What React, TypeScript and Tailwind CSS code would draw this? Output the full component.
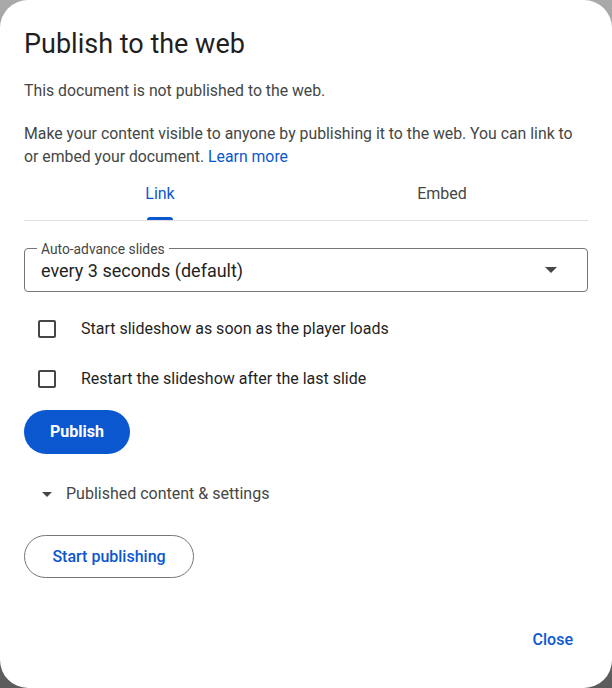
export default function App() {
  return (
    <div className="h-[688px] w-[612px] bg-gradient-to-b from-[#a9a9a9] to-[#5c5c5c] font-['Roboto',sans-serif]">
      <div className="flex h-full w-full flex-col rounded-[28px] bg-white px-6 pt-[26px] text-[#1f1f1f]">
        <h1 className="text-[27px] leading-[36px] text-[#1f1f1f]">Publish to the web</h1>

        <p className="mt-[18px] text-[15.8px] leading-[22px] text-[#444746]">
          This document is not published to the web.
        </p>
        <p className="mt-[20px] text-[15.8px] leading-[23px] text-[#444746]">
          Make your content visible to anyone by publishing it to the web. You can link to or embed
          your document. <a className="text-[#0b57d0]">Learn more</a>
        </p>

        {/* tabs */}
        <div className="mt-[14px] border-b border-[#e0e0e0]">
          <div className="-ml-[5px] mr-[5px] flex">
            <div className="flex flex-1 flex-col items-center">
              <span className="pt-[1px] text-[16px] leading-[22px] text-[#0b57d0]">Link</span>
              <span className="mt-[12px] h-[3px] w-[26px] rounded-t-[3px] bg-[#0b57d0]" />
            </div>
            <div className="flex flex-1 flex-col items-center">
              <span className="pt-[1px] text-[16px] leading-[22px] text-[#444746]">Embed</span>
              <span className="mt-[12px] h-[3px]" />
            </div>
          </div>
        </div>

        {/* select */}
        <div className="relative mt-[27px] flex h-[44px] items-center rounded-[4px] border border-[#747775] pl-4 pr-4">
          <span className="absolute -top-[8px] left-[12px] bg-white px-[4px] text-[13.8px] leading-[16px] text-[#444746]">
            Auto-advance slides
          </span>
          <span className="flex-1 pt-[2px] text-[18px] leading-[24px] text-[#1f1f1f]">every 3 seconds (default)</span>
          <svg width="12" height="6" viewBox="0 0 12 6" className="mr-[14px]">
            <path d="M0 0h12L6 6z" fill="#444746" />
          </svg>
        </div>

        {/* checkboxes */}
        <div className="mt-[27px] flex flex-col gap-[30px] pl-[14px]">
          {["Start slideshow as soon as the player loads", "Restart the slideshow after the last slide"].map(
            (t) => (
              <label key={t} className="flex h-[20px] items-center gap-[25px]">
                <span className="h-[18px] w-[18px] rounded-[2px] border-2 border-[#444746]" />
                <span className="text-[16px] leading-[20px] text-[#1f1f1f]">{t}</span>
              </label>
            )
          )}
        </div>

        <button className="mt-[21px] h-[44px] w-[106px] rounded-full bg-[#0b57d0] text-[16px] font-bold text-white">
          Publish
        </button>

        <div className="mt-[30px] flex h-[20px] items-center pl-[18px]">
          <svg width="10" height="5" viewBox="0 0 10 5">
            <path d="M0 0h10L5 5z" fill="#444746" />
          </svg>
          <span className="ml-[14px] text-[16px] leading-[20px] text-[#444746]">
            Published content &amp; settings
          </span>
        </div>

        <button className="mt-[31px] h-[43px] w-[170px] rounded-full border border-[#747775] text-[16px] font-medium text-[#0b57d0]">
          Start publishing
        </button>

        <div className="mt-[52px] flex justify-end pr-[15px]">
          <span className="text-[16px] font-medium leading-[20px] text-[#0b57d0]">Close</span>
        </div>
      </div>
    </div>
  );
}
